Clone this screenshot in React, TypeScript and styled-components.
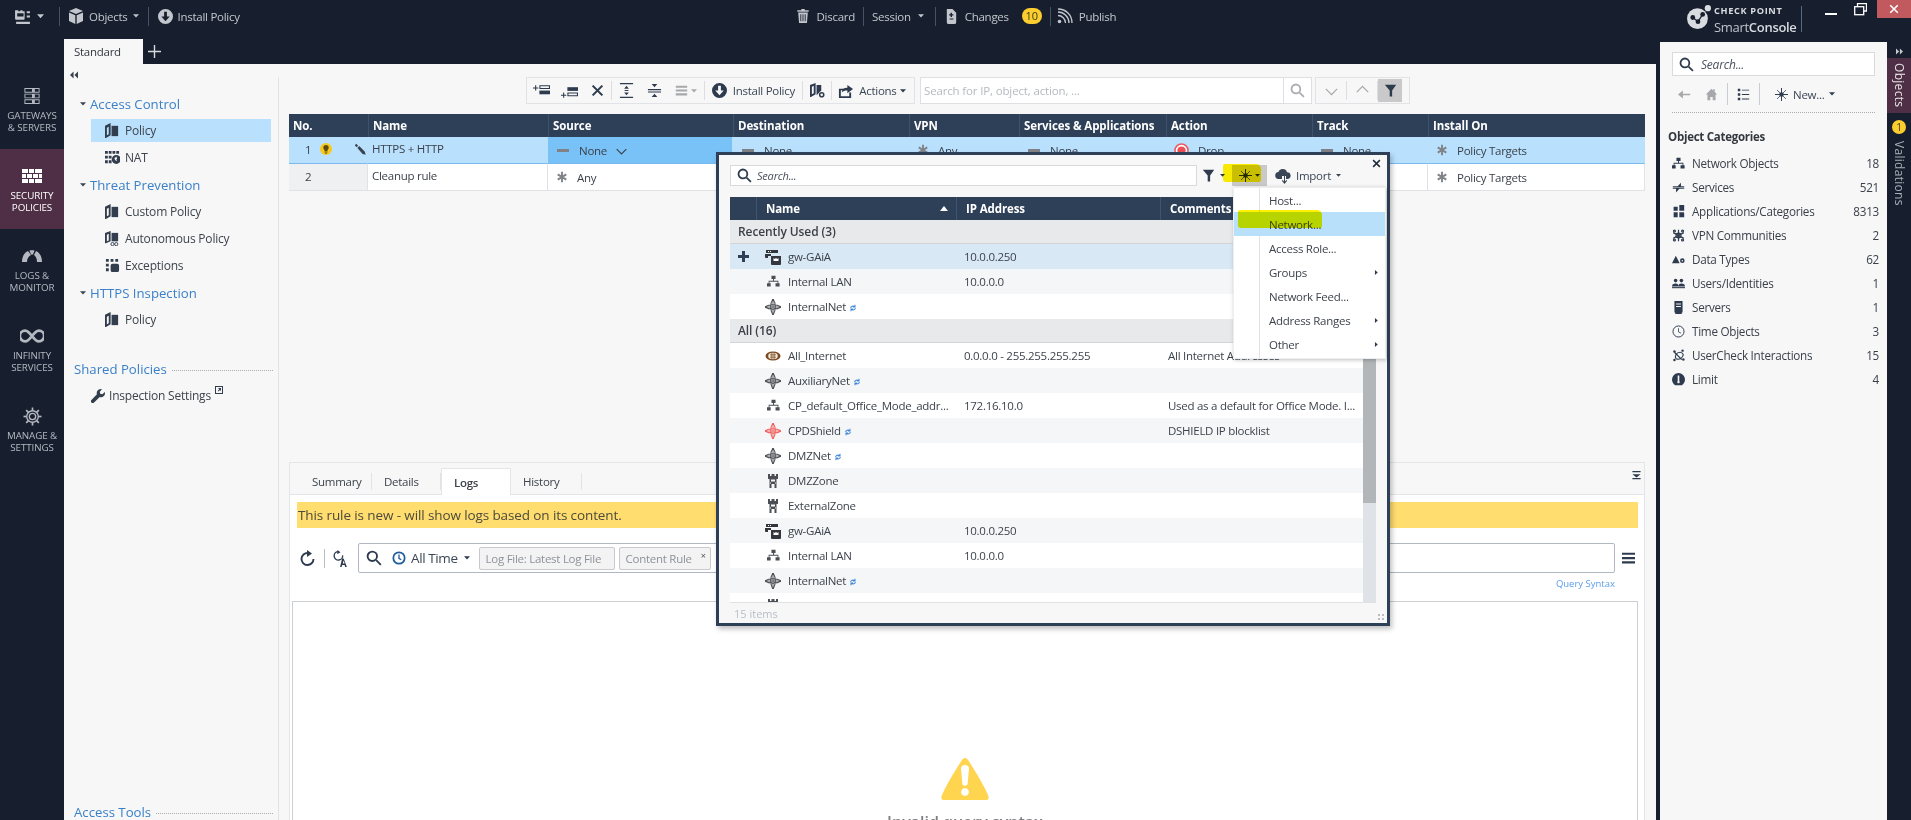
import React from 'react';
import styled, { createGlobalStyle } from 'styled-components';

const Global = createGlobalStyle`
  html, body { margin: 0; padding: 0; background: #171f2e; }
  * { box-sizing: border-box; }
`;

const DARK = '#171f2e';
const NAVY = '#2e3f58';
const INK = '#3b4049';
const PAPER = '#f7f7f7';
const MAROON = '#4e2f45';

const Root = styled.div`
  position: relative;
  width: 1911px;
  height: 820px;
  overflow: hidden;
  background: ${DARK};
  display: flex;
  flex-direction: column;
  font-family: "Open Sans", "Noto Sans", sans-serif;
  font-size: 11.5px;
  letter-spacing: -0.27px;
  color: ${INK};
`;

const Glyph = styled.svg<{ $c?: string }>`
  display: block;
  flex: none;
  color: ${(p) => p.$c || 'inherit'};
  fill: currentColor;
`;

type IconProps = { s?: number; c?: string };
const make = (body: React.ReactNode, vb = '0 0 16 16') =>
  ({ s = 16, c }: IconProps) => (
    <Glyph $c={c} width={s} height={s} viewBox={vb}>{body}</Glyph>
  );

const line = (d: string, w = 1.4) => <path d={d} fill="none" stroke="currentColor" strokeWidth={w} />;

/* header */
const ConsoleIcon = make(<><path d="M1 2h3v1h2V2h2v1h2V2h0v8a1 1 0 0 1-1 1H2a1 1 0 0 1-1-1z" /><path d="M3 5h6v3H3z" fill={DARK} /><path d="M12 3h3v2h-3zM12 7h3v2h-3zM2 13h13v2H2z" /></>);
const CubeIcon = make(<><path d="M8 0l7 3-7 3-7-3z" /><path d="M1 4.5l6.3 2.7V16L1 13z" /><path d="M15 4.5L8.7 7.2V16l6.3-3z" /></>);
const InstallIcon = make(<path fillRule="evenodd" d="M8 0a8 8 0 1 1 0 16A8 8 0 0 1 8 0zM6.5 3v5H3.5L8 13l4.5-5h-3V3z" />);
const TrashIcon = make(<path d="M6 0h4v1.5h4.5V3h-13V1.5H6zM2.5 4h11l-1 12h-9zM5 6v8h1V6zm2.5 0v8h1V6zM10 6v8h1V6z" />);
const ChangesIcon = make(<path fillRule="evenodd" d="M3 0h6l4 4v10a2 2 0 0 1-2 2H5a2 2 0 0 1-2-2zM7 4v1.5H5.500V7H7v1.500h1.500V7H10V5.500H8.500V4zM6 10v1.300h4V10z" />);
const RssIcon = make(<>{line('M1 4c6 0 11 5 11 11', 1.3)}{line('M1 7.500c4 0 7.500 3.500 7.500 7.500', 1.3)}{line('M1 1c8 0 14 6 14 14', 1.3)}<circle cx="2.500" cy="13.500" r="1.800" /></>);
const LogoIcon = make(<><circle cx="11" cy="13" r="10" /><g fill={DARK}><circle cx="6.500" cy="12" r="2.300" /><circle cx="11.500" cy="16" r="2.300" /><circle cx="16" cy="9" r="2.300" /></g><path d="M6.500 12l5 4 4.500-7" fill="none" stroke={DARK} strokeWidth="1.200" /><circle cx="21" cy="3" r="3" /></>, '0 0 24 24');

/* rail */
const GatewaysIcon = make(<g>{[1, 7, 13].map((y) => <path key={y} fillRule="evenodd" d={`M1 ${y}h16v5H1zM2 ${y + 1}v3h7v-3zM12 ${y + 1}v3h4v-3z`} />)}</g>, '0 0 18 19');
const BricksIcon = make(<path d="M0 1h6v4H0zM7 1h5v4H7zM13 1h7v4h-7zM0 6h4v4H0zM5 6h5v4H5zM11 6h5v4h-5zM17 6h3v4h-3zM0 11h6v4H0zM7 11h5v4H7zM13 11h7v4h-7z" />, '0 0 20 16');
const GaugeIcon = make(<path d="M1 14C1 8 4 4 7 3l3 4c-2 1-4 3-4 7zM8.500 2.500C9.500 2 12 2 13.500 2.500L12 6.500h-2zM15 3c3 1 6 5 6 11h-5c0-4-1.500-6-3-7z" />, '0 0 22 16');
const InfinityIcon = make(line('M11 8C8 4 6.500 3 4.800 3a5 5 0 0 0 0 10C6.500 13 8 12 11 8c3-4 4.500-5 6.200-5a5 5 0 0 1 0 10C15.500 13 14 12 11 8z', 2.600), '0 0 22 16');
const GearIcon = make(<><circle cx="9" cy="9" r="5.500" fill="none" stroke="currentColor" strokeWidth="1.300" /><circle cx="9" cy="9" r="3" fill="none" stroke="currentColor" strokeWidth="1.300" /><g stroke="currentColor" strokeWidth="1.600">{[0, 45, 90, 135, 180, 225, 270, 315].map((a) => <line key={a} x1="9" y1="0.500" x2="9" y2="3.500" transform={`rotate(${a} 9 9)`} />)}</g></>, '0 0 18 18');

/* nav */
const BookIcon = make(<><path fillRule="evenodd" d="M0 3l6-3v13l-5 3H0zM2 5v8l2-1V4z" /><path d="M7 3h7v11H7z" /></>);
const NatIcon = make(<><path d="M0 1h3v3H0zM4 1h3v3H4zM8 1h3v3H8zM12 1h3v3h-3zM0 6h3v3H0zM4 6h3v3H4zM0 11h3v3H0zM4 11h3v3H4z" /><circle cx="12" cy="10" r="4.800" /><path d="M10 9l2-2 1 2-1 1 1 2-2-1z" fill={PAPER} /></>);
const AutoBookIcon = make(<><path fillRule="evenodd" d="M0 2l6-2v11l-5 2H0zM2 4v7l2-1V3z" /><path d="M7 2h7v9H7z" /><circle cx="8" cy="14" r="1.700" fill="none" stroke="currentColor" /><circle cx="12" cy="14" r="1.700" fill="none" stroke="currentColor" /></>);
const ExceptionsIcon = make(<path d="M1 1h3v3H1zM6 1h3v3H6zM11 1h3v3h-3zM1 6h3v3H1zM1 11h3v3H1zM8 6h5a2 2 0 0 1 2 2v5a2 2 0 0 1-2 2H8a2 2 0 0 1-2-2V8a2 2 0 0 1 2-2z" />);
const WrenchIcon = make(<path d="M11 0a4.500 4.500 0 0 1 1.500.3L10 3l.5 2.500L13 6l2.700-2.500A4.500 4.500 0 0 1 10 9.200L3.500 15.500a1.500 1.500 0 0 1-3-3L6.800 6A4.500 4.500 0 0 1 11 0z" />);
const JumpIcon = make(<path fillRule="evenodd" d="M0 0h8v8H0zM1 1v6h6V1zM3 2h3v3l-1-1-1.500 1.500-.7-.7L4.300 3.300z" />, '0 0 8 8');

/* toolbar */
const AddAboveIcon = make(<><path d="M0 3h2V1h1v2h2v1H3v2H2V4H0z" /><path fillRule="evenodd" d="M6 1h10v3.500H6zM7 2v1.500h8V2z" /><path d="M6 6h10v3.500H6z" /></>, '0 0 16 10');
const AddBelowIcon = make(<><path d="M6 0h10v3.500H6z" /><path fillRule="evenodd" d="M6 5h10v3.500H6zM7 6v1.500h8V6z" /><path d="M0 7h2V5h1v2h2v1H3v2H2V8H0z" /></>, '0 0 16 10');
const CrossIcon = make(line('M2 2l12 12M14 2L2 14', 2.600));
const ExpandIcon = make(<path d="M1 0h14v1.300H1zM1 14.700h14V16H1zM8 3l2.500 3h-5zM8 13l-2.500-3h5zM6 7.400h4v1.200H6z" />);
const CollapseIcon = make(<path d="M5 1h6L8 4.500zM1 6.500h14v1.200H1zM1 9h14v1.200H1zM5 15h6l-3-3.500z" />);
const LinesIcon = make(<path d="M1 2h14v2.500H1zM1 6.700h14v2.500H1zM1 11.500h14V14H1z" />);
const PolicyGearIcon = make(<><path fillRule="evenodd" d="M0 2l6-2v12l-5 3H0zM2 4v8l2-1V3z" /><path d="M7 2h5v6l-5 5z" /><circle cx="12.500" cy="12.500" r="2.200" fill="none" stroke="currentColor" strokeWidth="1.600" /></>);
const ShareIcon = make(<><path d="M1 6h6v1.800H3v6.400h9V10h2v6H1z" /><path d="M4 10c0-3 2-5 6-5V2l6 4.500L10 11V8C7 8 5.500 8.500 4 10z" /></>);
const SearchIcon = make(<><circle cx="6.300" cy="6.300" r="4.700" fill="none" stroke="currentColor" strokeWidth="1.900" /><path d="M9.500 10.800l1.300-1.300 4.700 4.700-1.300 1.300z" /></>);
const FunnelIcon = make(<path d="M1 1h14L10 8v7.500H7V8z" />);
const CaretDown = make(<path d="M0 0h8L4 4.500z" />, '0 0 8 5');
const CaretRight = make(<path d="M0 0v8l4.500-4z" />, '0 0 5 8');
const ChevUp = make(line('M1 10l7-7 7 7', 1.500));
const ChevDown = make(line('M1 6l7 7 7-7', 1.500));

/* table */
const DashIcon = make(<path d="M1 6h12v3H1z" fill="#808287" />, '0 0 14 14');
const AnyIcon = make(<path stroke="#7f8287" strokeWidth="2.200" d="M7 1v12M2 4l10 6M12 4L2 10" />, '0 0 14 14');
const PencilIcon = make(<path d="M1 3l2-2 2.500 2.500-2 2zM4.500 6.500L7 4l7.500 7.500 1 4-4-1z" />);
const BulbIcon = make(<><circle cx="8" cy="8" r="8" fill="#f8c81e" /><path d="M8 2.500a3.700 3.700 0 0 1 2 6.800V11H6V9.300A3.700 3.700 0 0 1 8 2.500zM6 11.800h4v1H6zM7 13.300h2v1H7z" fill="#5a4a10" /></>);
const DropIcon = make(<><circle cx="8" cy="8" r="7" fill="#fff" stroke="#ea5a62" strokeWidth="1.600" /><circle cx="8" cy="8" r="4.400" fill="#ee4e55" /></>);

/* popup + categories */
const TreeIcon = make(<path d="M5.500 1h5v4H8.600v2H14v3h1.500v4h-5v-4H13V8.200H3V10h1.500v4h-5v-4H2V7h5.400V5H5.500z" />);
const NetIcon = make(<><path d="M8 0C11 4 11 12 8 16 5 12 5 4 8 0zM0 8c4-3 12-3 16 0-4 3-12 3-16 0z" fill="none" stroke="currentColor" strokeWidth="1.100" /><path d="M8 0v16M0 8h16" stroke="currentColor" strokeWidth=".9" /></>);
const ZoneIcon = make(<path fillRule="evenodd" d="M3 1h2v2h1.500V1h3v2H11V1h2v5h-1.500v9H9.500v-4h-3v4h-2V6H3zM6 6.500v2h4v-2zM5 9.500v1h1v-1zm5 0v1h1v-1z" />);
const GwIcon = make(<><path fillRule="evenodd" d="M1 1h12v3H1zM0 5h6v2H3v2H1a1 1 0 0 1-1-1z" /><path d="M6 7h10v8a1 1 0 0 1-1 1H7a1 1 0 0 1-1-1z" /><path d="M8.500 9l1.300 1L11 9l1.200 1L13.500 9v3h-5z" fill="#fff" /><path d="M3 2h1v1H3zm2 0h1v1H5z" fill="#fff" /></>);
const BallIcon = make(<><ellipse cx="8" cy="8" rx="7.500" ry="4.500" fill="#7a4a22" /><ellipse cx="8" cy="8" rx="4.800" ry="3.200" fill="#f2e8d8" /><path d="M5 6.500h6v.8H5zM5 8.700h6v.8H5zM6.500 5h.8v6h-.8zM8.700 5h.8v6h-.8z" fill="#7a4a22" /></>);
const SyncIcon = make(<path fill="none" stroke="#3d86d8" strokeWidth="1.300" d="M2 5a3 3 0 0 1 5-1.600M8 5a3 3 0 0 1-5 1.600M7.500 1v2.600H5M2.500 9V6.400H5" />, '0 0 10 10');
const CloudIcon = make(<><path d="M4 11a3.500 3.500 0 0 1-.5-7A4.500 4.500 0 0 1 12 4.300 3.400 3.400 0 0 1 13 11h-2V8H7v3z" /><path d="M9 7h1v6.500l1.500-1.500.7.700L9.500 16l-2.700-3.300.7-.700L9 13.500z" /></>);
const StarIcon = make(<g stroke="currentColor"><path strokeWidth="1.200" d="M8 0v16M0 8h16" /><path strokeWidth=".900" d="M2.500 2.500l11 11M13.500 2.500l-11 11" /><circle cx="8" cy="8" r="2.800" stroke="none" /></g>);
const SwapIcon = make(<path d="M1 6.500h6L11 2v4.500h4v1.300H1zM15 9.500H9L5 14V9.500H1V8.200h14z" />);
const AppsIcon = make(<path d="M2 2h5v5H2zM9 0h6a1 1 0 0 1 0 0v7H9zM2 9h5v6H2zM9 9h5a1 1 0 0 1 1 1v5H9z" />);
const SnowIcon = make(<g stroke="currentColor" strokeWidth="1.500" fill="none"><path d="M8 1v14M1.500 4.500l13 7M14.500 4.500l-13 7" /><circle cx="8" cy="8" r="3" /><circle cx="3" cy="2.500" r="1.200" /><circle cx="13" cy="2.500" r="1.200" /><circle cx="3" cy="13.500" r="1.200" /><circle cx="13" cy="13.500" r="1.200" /></g>);
const DataIcon = make(<><path d="M5 3l5 10H0z" /><path fillRule="evenodd" d="M13.500 6.500a3 3 0 1 1 0 6 3 3 0 0 1 0-6zm0 2a1 1 0 1 0 0 2 1 1 0 0 0 0-2z" /></>, '0 0 17 16');
const UsersIcon = make(<><circle cx="5" cy="4" r="2.500" /><circle cx="13" cy="4" r="2.500" /><path d="M0 12c0-3 2-4 5-4s4 1 4 4zM9 12c0-3 1-4 4-4s5 1 5 4z" /><path d="M0 13h18v1.500H0z" /></>, '0 0 18 16');
const ServerIcon = make(<path fillRule="evenodd" d="M3 0h10v14h-1v2H4v-2H3zM5 3v1.300h6V3zm0 3v1.300h6V6z" />);
const ClockIcon = make(<><circle cx="8" cy="8" r="6.800" fill="none" stroke="currentColor" strokeWidth="1.200" /><path d="M8 4v4.500l3 1.500" fill="none" stroke="currentColor" strokeWidth="1" /></>);
const CheckIcon = make(<><circle cx="3" cy="3" r="1.500" /><circle cx="13" cy="2" r="1.500" /><circle cx="3" cy="13.500" r="1.500" /><circle cx="14" cy="13" r="1.500" /><path d="M3 4l9 9" stroke="currentColor" strokeWidth="1.500" fill="none" /><path d="M5 12c-2-3 0-8 5-8 2 0 3 1 4 3-1 4-5 7-9 5z" fill="none" stroke="currentColor" strokeWidth="1.300" /></>);
const LimitIcon = make(<path fillRule="evenodd" d="M8 0a8 8 0 0 1 8 8c0 3-1.500 5.500-4 7H4C1.500 13.500 0 11 0 8a8 8 0 0 1 8-8zM7 3v7a1.500 1.500 0 1 0 2 0V3z" />);
const HomeIcon = make(<path d="M8 1l2 2V1.500h2V5l3 3h-2v7H9.500v-4h-3v4H3V8H1z" />);
const ArrowLeftIcon = make(<path d="M6 3v4h9v2H6v4L0 8z" />);
const ListIcon = make(<path d="M1 1h3v3H1zM6 2h9v1H6zM1 6.500h3v3H1zM6 7.500h9v1H6zM1 12h3v3H1zM6 13h9v1H6z" />);
const TwinLeft = make(<path d="M4 0v8L0 4zM9 0v8L5 4z" />, '0 0 9 8');
const TwinRight = make(<path d="M0 0v8l4-4zM5 0v8l4-4z" />, '0 0 9 8');
const TwinDown = make(<path d="M0 0h10v1.500H0zM0 4h10L5 8zM0 8.500h10V10H0z" />, '0 0 10 11');
const RefreshIcon = make(<><path d="M13.500 9A6 6 0 1 1 8 3" fill="none" stroke="currentColor" strokeWidth="1.900" /><path d="M7 0l5 3.500L7 7z" /></>);
const RefreshAIcon = make(<><path d="M10 5A4 4 0 1 1 5.500 1.500" fill="none" stroke="currentColor" strokeWidth="1.300" /><path d="M5 0l3 2-3 2z" /><path d="M9.500 8h1.500l3 8h-1.500l-.7-2H9.700L9 16H7.600zm.6 4.800h1.800l-.9-3z" /></>);
const BlueClockIcon = make(<><circle cx="8" cy="8" r="6.500" fill="none" stroke="#1e5c9c" strokeWidth="2" /><path d="M8 4v4.500l2.500 1.500" fill="none" stroke="#1e5c9c" strokeWidth="1.500" /></>);
const MenuIcon = make(<path d="M0 1h16v2.500H0zM0 6.300h16v2.500H0zM0 11.500h16V14H0z" />);
const PlusIcon = make(<path d="M5.800 0h1.400v5.800H13v1.400H7.200V13H5.800V7.200H0V5.800h5.800z" />, '0 0 13 13');
const BoldPlusIcon = make(<path d="M4 0h3v4h4v3H7v4H4V7H0V4h4z" />, '0 0 11 11');
const WarnIcon = make(<><path d="M24 0c1.500 0 2.400 1 3.400 2.500C33 11 44 29 47.500 38.500c.6 1.700-.3 3.500-2 3.500H2.500c-1.700 0-2.600-1.800-2-3.500C4 29 15 11 20.600 2.500 21.600 1 22.500 0 24 0z" fill="#ffd44f" /><path d="M20 11a4 4 0 0 1 8 0l-1.300 14a2.700 2.700 0 0 1-5.400 0z" fill="#fff" /><circle cx="24" cy="34" r="3.800" fill="#fff" /></>, '0 0 48 42');

/* header bar */
const Header = styled.header`
  height: 39px;
  flex: none;
  display: flex;
  color: #c3c7cd;
`;
const HeaderLeft = styled.div`
  width: 795px;
  padding: 0 0 7px 14px;
  display: flex;
  align-items: center;
`;
const HeaderCenter = styled(HeaderLeft)`
  width: 892px;
  padding-left: 1px;
`;
const HeaderRight = styled.div`
  flex: 1;
  display: flex;
  align-items: flex-start;
`;
const HeaderSep = styled.span<{ $l: number; $r: number }>`
  width: 1px;
  height: 19px;
  background: #4a5262;
  margin: 0 ${(p) => p.$r}px 0 ${(p) => p.$l}px;
`;
const HeaderAction = styled.span<{ $gap?: number }>`
  display: flex;
  align-items: center;
  gap: ${(p) => p.$gap ?? 5}px;
  white-space: nowrap;
`;
const MenuGap = styled.span`
  width: 6px;
`;
const CountBadge = styled.span`
  width: 20px;
  height: 16px;
  border-radius: 8px;
  background: #fbcd2f;
  color: #3a3a20;
  font-size: 11px;
  letter-spacing: 0;
  line-height: 16px;
  text-align: center;
  margin-left: 13px;
`;
const Brand = styled.div`
  display: flex;
  align-items: flex-start;
  color: #d8dbe0;
  margin-top: 5px;
`;
const BrandText = styled.div`
  margin-left: 3px;
  width: 87px;
`;
const BrandTop = styled.div`
  font-size: 9.2px;
  font-weight: 700;
  letter-spacing: 0.65px;
  line-height: 12px;
`;
const BrandName = styled.div`
  font-size: 13px;
  letter-spacing: -0.3px;
  line-height: 18px;
  margin-top: 1px;
  color: #bfc4cc;
  b { font-weight: 600; color: #d8dbe0; }
`;
const BrandSep = styled.span`
  width: 1px;
  height: 26px;
  background: #55688a;
  margin-top: 1px;
`;
const WindowButtons = styled.div`
  flex: 1;
  display: flex;
  align-items: flex-start;
  color: #fff;
`;
const MinGlyph = styled.span`
  width: 12px;
  height: 2px;
  background: #fff;
  margin: 13px 0 0 23px;
`;
const RestoreGlyph = styled.svg`
  margin: 3px 0 0 17px;
  fill: none;
  stroke: #fff;
`;
const CloseBtn = styled.span`
  margin-left: 10px;
  width: 34px;
  height: 18px;
  background: #c15a5f;
  display: flex;
  align-items: center;
  justify-content: center;
`;

const Body = styled.div`
  flex: 1;
  display: flex;
  min-height: 0;
`;

/* left rail */
const Rail = styled.nav`
  width: 64px;
  flex: none;
  padding-top: 30px;
`;
const RailItem = styled.div<{ $active?: boolean }>`
  height: 80px;
  padding-top: 17px;
  background: ${(p) => (p.$active ? MAROON : 'transparent')};
  color: ${(p) => (p.$active ? '#fff' : '#b4b9c1')};
  display: flex;
  flex-direction: column;
  align-items: center;
  text-align: center;
`;
const RailIconBox = styled.div`
  height: 20px;
  display: flex;
  align-items: center;
`;
const RailLabel = styled.div`
  font-size: 9.8px;
  letter-spacing: -0.1px;
  line-height: 12px;
  margin-top: 4px;
  text-transform: uppercase;
`;

/* workspace */
const Workspace = styled.main`
  width: 1592px;
  flex: none;
  display: flex;
  flex-direction: column;
`;
const TabStrip = styled.div`
  height: 25px;
  flex: none;
  display: flex;
  align-items: center;
`;
const WorkTab = styled.div`
  width: 79px;
  height: 25px;
  background: ${PAPER};
  padding-left: 10px;
  line-height: 25px;
  color: #33383f;
`;
const PlusBtn = styled.span`
  margin-left: 5px;
  color: #d6d9de;
`;
const Content = styled.div`
  flex: 1;
  display: flex;
  background: ${PAPER};
  min-height: 0;
`;

/* policy nav */
const NavPane = styled.aside`
  width: 215px;
  flex: none;
  margin-top: 13px;
  border-right: 1px solid #e1e3e6;
  display: flex;
  flex-direction: column;
`;
const CollapseBtn = styled.div`
  height: 12px;
  margin: -6px 0 0 6px;
  color: #39414d;
`;
const NavTree = styled.div`
  padding-top: 7px;
  display: flex;
  flex-direction: column;
`;
const NavHeading = styled.div`
  height: 27px;
  display: flex;
  align-items: center;
  padding-left: 16px;
  font-size: 13.2px;
  letter-spacing: 0;
  gap: 4px;
  color: #3a80c9;
  svg { color: #3a4350; }
`;
const NavRow = styled.div<{ $on?: boolean }>`
  margin: 2px 7px 2px 27px;
  height: 23px;
  padding-left: 14px;
  background: ${(p) => (p.$on ? '#b9e1fd' : 'transparent')};
  display: flex;
  align-items: center;
  gap: 5px;
  font-size: 12px;
  letter-spacing: -0.2px;
  color: #3d434c;
  svg { color: #323d4d; }
`;
const SharedHeading = styled.div<{ $bottom?: boolean }>`
  margin: ${(p) => (p.$bottom ? 'auto 5px -2px 10px' : '26px 5px 0 10px')};
  height: 20px;
  display: flex;
  align-items: center;
  gap: 5px;
  font-size: 13.2px;
  letter-spacing: 0;
  color: #3a80c9;
  &::after {
    content: '';
    flex: 1;
    border-top: 1px dotted #a9adb3;
    margin-top: 2px;
  }
`;
const InspectionRow = styled.div`
  margin: 5px 0 0 27px;
  height: 23px;
  display: flex;
  align-items: center;
  gap: 4px;
  font-size: 12px;
  letter-spacing: -0.2px;
  color: #3d434c;
  svg { color: #323d4d; }
`;
const Jump = styled.span`
  align-self: flex-start;
  margin-top: 2px;
  color: #323d4d;
`;

/* rulebase */
const Main = styled.section`
  flex: 1;
  min-width: 0;
  padding: 13px 11px 0 10px;
  display: flex;
  flex-direction: column;
`;
const ToolRow = styled.div`
  height: 27px;
  flex: none;
  margin-left: 237px;
  display: flex;
`;
const ToolBox = styled.div<{ $w: number }>`
  width: ${(p) => p.$w}px;
  border: 1px solid #e1e3e6;
  display: flex;
  align-items: center;
  color: #2e3b4e;
`;
const ToolSlot = styled.span<{ $w: number; $off?: boolean; $sel?: boolean; $dy?: number }>`
  width: ${(p) => p.$w}px;
  display: flex;
  align-items: center;
  justify-content: center;
  color: ${(p) => (p.$off ? '#a6a8ab' : '#2e3b4e')};
  height: ${(p) => (p.$sel ? '23px' : 'auto')};
  background: ${(p) => (p.$sel ? '#c9c9c9' : 'transparent')};
  gap: 3px;
  margin-top: ${(p) => (p.$dy ?? 0) * 2}px;
`;
const ToolSep = styled.span`
  width: 1px;
  height: 19px;
  background: #dcdee1;
`;
const ToolLabel = styled.span`
  color: #3a4656;
  white-space: nowrap;
`;
const RuleSearch = styled.div`
  width: 392px;
  margin: 0 3px 0 5px;
  border: 1px solid #dddfe3;
  background: #fff;
  display: flex;
  align-items: center;
  padding-left: 3px;
  letter-spacing: -0.15px;
  color: #b5b9c0;
`;
const RuleSearchBtn = styled.span`
  margin-left: auto;
  width: 28px;
  height: 100%;
  border-left: 1px solid #dddfe3;
  display: flex;
  align-items: center;
  justify-content: center;
  color: #a9acb0;
`;

const RuleTable = styled.div`
  margin-top: 10px;
  flex: none;
  display: grid;
  grid-template-columns: 79px 180px 185px 176px 110px 147px 146px 116px 217px;
  grid-template-rows: 23px 27px 27px;
`;
const Head = styled.div`
  background: ${NAVY};
  color: #fff;
  font-weight: 700;
  letter-spacing: -0.1px;
  display: flex;
  align-items: center;
  padding-left: 4px;
  border-left: 1px solid #3e5270;
  &:first-child { border-left: 0; }
`;
const Cell = styled.div<{ $row: 'sel' | 'plain' | 'focus' | 'num' }>`
  display: flex;
  align-items: center;
  gap: 9px;
  padding-left: 8px;
  color: #3a3f48;
  white-space: nowrap;
  background: ${(p) =>
    p.$row === 'sel' ? '#b9e1fd' : p.$row === 'focus' ? '#78c2f7' : p.$row === 'num' ? '#eff0f2' : '#fff'};
  border-bottom: 1px solid ${(p) => (p.$row === 'sel' || p.$row === 'focus' ? '#78b9ee' : '#e0e2e6')};
  border-right: 1px solid ${(p) => (p.$row === 'sel' || p.$row === 'focus' ? '#b9e1fd' : '#e0e2e6')};
`;
const NumCell = styled(Cell)`
  padding-left: 16px;
  padding-bottom: 2px;
`;
const NameCell = styled(Cell)`
  padding-left: 4px;
  padding-bottom: 3px;
`;
const PencilBox = styled.span`
  margin-left: auto;
  margin-right: 1px;
  display: flex;
  color: #3a4350;
`;

/* lower pane */
const LowerPane = styled.div`
  margin-top: 271px;
  flex: 1;
  min-height: 0;
  display: flex;
  flex-direction: column;
  border: 1px solid #e3e5e8;
  border-bottom: 0;
`;
const PaneTabs = styled.div`
  height: 31px;
  flex: none;
  padding: 5px 0 0 10px;
  display: flex;
  align-items: stretch;
  color: #3d434c;
`;
const PaneTab = styled.div<{ $on?: boolean; $w: number }>`
  width: ${(p) => p.$w}px;
  display: flex;
  align-items: center;
  padding-left: 12px;
  margin-bottom: -1px;
  background: ${(p) => (p.$on ? '#fff' : 'transparent')};
  border: ${(p) => (p.$on ? '1px solid #e3e5e8' : 0)};
  border-bottom: 0;
  font-weight: ${(p) => (p.$on ? 600 : 400)};
  position: relative;
  z-index: 1;
  &::after {
    content: '';
    display: ${(p) => (p.$on ? 'none' : 'block')};
    margin-left: auto;
    width: 1px;
    height: 17px;
    background: #e1e3e6;
  }
`;
const PaneFold = styled.span`
  margin: 3px 3px 0 auto;
  color: #2e3b4e;
`;
const PaneBody = styled.div`
  flex: 1;
  min-height: 0;
  background: #fff;
  border-top: 1px solid #e3e5e8;
  display: flex;
  flex-direction: column;
`;
const Notice = styled.div`
  margin: 7px 6px 0 7px;
  height: 26px;
  background: #ffdd6e;
  font-size: 13.5px;
  letter-spacing: -0.11px;
  line-height: 26px;
  padding-left: 1px;
  color: #4c4a3c;
  flex: none;
`;
const QueryRow = styled.div`
  margin-top: 15px;
  height: 30px;
  flex: none;
  display: flex;
  align-items: center;
  padding-left: 10px;
  color: #2e3b4e;
`;
const ThinSep = styled.span`
  width: 1px;
  height: 19px;
  background: #b9bdc4;
  margin: 0 7px 0 8px;
`;
const QueryBox = styled.div`
  margin-left: 9px;
  width: 1257px;
  height: 30px;
  border: 1px solid #b2b8c2;
  border-radius: 2px;
  display: flex;
  align-items: center;
  padding-left: 7px;
  color: #2e3b4e;
`;
const QuerySearch = styled.span`
  margin-right: 10px;
`;
const AllTime = styled.span`
  margin: 0 6px 0 5px;
  font-size: 13.5px;
  letter-spacing: -0.4px;
  color: #3a4656;
  white-space: nowrap;
`;
const Pill = styled.span<{ $w: number; $first?: boolean }>`
  position: relative;
  width: ${(p) => p.$w}px;
  height: 23px;
  border: 1px solid #c6c9cd;
  border-radius: 2px;
  background: #f3f3f3;
  margin-left: ${(p) => (p.$first ? 9 : 4)}px;
  padding-left: 6px;
  line-height: 21px;
  white-space: nowrap;
  color: #8d9299;
`;
const PillClose = styled.span`
  position: absolute;
  right: 4px;
  top: -3px;
  font-size: 9px;
  color: #555;
`;
const QueryMenu = styled.span`
  margin-left: 7px;
`;
const SyntaxLink = styled.div`
  flex: none;
  height: 22px;
  padding: 4px 29px 0 0;
  text-align: right;
  font-size: 9.5px;
  letter-spacing: 0;
  line-height: 14px;
  color: #5a9de8;
`;
const ResultBox = styled.div`
  margin: 6px 6px 0 2px;
  flex: 1;
  border: 1px solid #cdcfd2;
  border-bottom: 0;
  display: flex;
  flex-direction: column;
  align-items: center;
  padding-top: 153px;
`;
const ResultText = styled.div`
  margin-top: 8px;
  font-size: 16px;
  letter-spacing: 0;
  line-height: 22px;
  font-weight: 600;
  color: #7e7e80;
  white-space: nowrap;
  height: 30px;
`;

/* right panel */
const RightPanel = styled.aside`
  width: 227px;
  flex: none;
  margin: 3px 0 0 4px;
  background: ${PAPER};
  padding: 10px 12px 0;
`;
const RightSearch = styled.div`
  height: 24px;
  width: 203px;
  border: 1px solid #d8dade;
  background: #fff;
  display: flex;
  align-items: center;
  gap: 7px;
  padding-left: 6px;
  font-style: italic;
  font-size: 12px;
  letter-spacing: -0.2px;
  color: #4a515c;
  svg { color: #2e3b4e; }
`;
const RightTools = styled.div`
  height: 30px;
  margin-top: 3px;
  display: flex;
  align-items: center;
  color: #a6a8ab;
  padding-left: 6px;
`;
const ToolSpacer = styled.span`
  width: 14px;
`;
const RightSep = styled.span<{ $l: number; $r: number }>`
  width: 1px;
  height: 22px;
  background: #c9ccd0;
  margin: 0 ${(p) => p.$r}px 0 ${(p) => p.$l}px;
`;
const ListSlot = styled.span`
  color: #2e3b4e;
`;
const NewBtn = styled.span`
  display: flex;
  align-items: center;
  gap: 5px;
  color: #3a4656;
  svg { color: #2e3b4e; }
`;
const Dotted = styled.div`
  margin-top: 3px;
  border-top: 1px dotted #a9adb3;
  width: 203px;
`;
const CatTitle = styled.div`
  margin: 14px 0 0 -4px;
  font-weight: 700;
  line-height: 20px;
  color: #33383f;
`;
const CatList = styled.div`
  margin: 4px 0 0 -4px;
`;
const CatRow = styled.div`
  height: 24px;
  display: flex;
  align-items: center;
  font-size: 11.7px;
  color: #3a404a;
  white-space: nowrap;
`;
const CatIcon = styled.span`
  width: 24px;
  flex: none;
  display: flex;
  justify-content: center;
  padding-right: 3px;
  color: #2e3b4e;
`;
const CatCount = styled.span`
  margin-left: auto;
  margin-right: -4px;
`;

/* right side tabs */
const SideTabs = styled.div`
  flex: 1;
  padding-top: 9px;
  color: #a8adb5;
  display: flex;
  flex-direction: column;
  align-items: center;
`;
const SideChevron = styled.div`
  height: 10px;
  color: #c6c9ce;
`;
const SideTab = styled.div<{ $on?: boolean }>`
  writing-mode: vertical-rl;
  width: 100%;
  font-size: 12px;
  letter-spacing: 0.3px;
  display: flex;
  align-items: center;
  justify-content: center;
  height: ${(p) => (p.$on ? '55px' : 'auto')};
  margin-top: ${(p) => (p.$on ? '0' : '7px')};
  background: ${(p) => (p.$on ? MAROON : 'transparent')};
  color: ${(p) => (p.$on ? '#e6e3e6' : '#a8adb5')};
`;
const SideBadge = styled.span`
  margin-top: 7px;
  width: 14px;
  height: 14px;
  border-radius: 50%;
  background: #fbcd2f;
  color: #3a3a20;
  font-size: 10px;
  letter-spacing: 0;
  line-height: 14px;
  text-align: center;
`;

/* object picker popup */
const Picker = styled.div`
  position: absolute;
  left: 716px;
  top: 152px;
  width: 674px;
  height: 474px;
  background: ${PAPER};
  border: 3px solid ${NAVY};
  box-shadow: 2px 3px 5px rgba(0, 0, 0, 0.25);
  padding: 10px 0 0 11px;
  display: flex;
  flex-direction: column;
`;
const PickerClose = styled.span`
  position: absolute;
  right: 6px;
  top: 4px;
  color: #1f2a3a;
`;
const PickerBar = styled.div`
  height: 21px;
  flex: none;
  display: flex;
  align-items: center;
  color: #2e3b4e;
`;
const PickerSearch = styled(RightSearch)`
  width: 467px;
  height: 21px;
  gap: 5px;
  font-size: 11px;
`;
const PickerFilter = styled.span`
  margin-left: 5px;
  display: flex;
  align-items: center;
  gap: 5px;
  width: 30px;
`;
const NewToggle = styled.span`
  width: 35px;
  height: 21px;
  background: #c9c9c9;
  display: flex;
  align-items: center;
  justify-content: center;
  gap: 3px;
  color: #1f2a3a;
`;
const ImportBtn = styled.span`
  margin-left: 8px;
  display: flex;
  align-items: center;
  gap: 5px;
  color: #3a4656;
`;
const ObjGrid = styled.div`
  margin-top: 11px;
  width: 646px;
  height: 406px;
  flex: none;
  display: flex;
  flex-direction: column;
  border-bottom: 1px solid #dfe1e4;
`;
const ObjHead = styled.div`
  height: 23px;
  flex: none;
  background: ${NAVY};
  display: grid;
  grid-template-columns: 27px 200px 204px 1fr;
`;
const ObjHeadCell = styled.div`
  display: flex;
  align-items: center;
  padding-left: 9px;
  color: #fff;
  font-weight: 700;
  letter-spacing: -0.1px;
  border-right: 1px solid #41546f;
  &:last-child { border-right: 0; }
`;
const SortArrow = styled.span`
  margin-left: auto;
  margin-right: 8px;
  width: 0;
  height: 0;
  border: 4px solid transparent;
  border-top: 0;
  border-bottom: 5px solid #fff;
`;
const ObjBody = styled.div`
  flex: 1;
  min-height: 0;
  display: flex;
  overflow: hidden;
`;
const ObjRows = styled.div`
  flex: 1;
  min-width: 0;
`;
const ObjTrack = styled.div`
  width: 13px;
  flex: none;
  background: #dfe2e6;
  padding-top: 110px;
`;
const ObjThumb = styled.div`
  height: 173px;
  background: #b2b6b8;
`;
const SectionRow = styled.div`
  height: 24px;
  background: #e8e9eb;
  border-bottom: 1px solid #d3d5d8;
  padding-left: 8px;
  line-height: 23px;
  font-weight: 600;
  font-size: 12px;
  letter-spacing: -0.1px;
  color: #3a3f48;
`;
const ObjRow = styled.div<{ $tone: 'sel' | 'alt' | 'plain' }>`
  height: 25px;
  display: grid;
  grid-template-columns: 27px 200px 204px 1fr;
  align-items: center;
  color: #3d434c;
  background: ${(p) => (p.$tone === 'sel' ? '#d8e8f5' : p.$tone === 'alt' ? '#f5f6f8' : '#fff')};
`;
const RowPlus = styled.span`
  display: flex;
  justify-content: center;
  color: ${NAVY};
`;
const ObjName = styled.div`
  display: flex;
  align-items: center;
  padding-left: 8px;
  white-space: nowrap;
`;
const ObjIconBox = styled.span`
  width: 16px;
  flex: none;
  margin-right: 7px;
  display: flex;
  justify-content: center;
`;
const ObjText = styled.div`
  padding-left: 7px;
  white-space: nowrap;
  overflow: hidden;
`;
const SyncMark = styled.span`
  align-self: flex-start;
  margin: 5px 0 0 3px;
`;
const PickerFoot = styled.div`
  flex: 1;
  display: flex;
  align-items: center;
  padding-left: 4px;
  font-size: 11px;
  letter-spacing: 0;
  color: #b7bdc8;
`;
const ResizeDots = styled.span`
  position: absolute;
  right: 2px;
  bottom: 2px;
  width: 8px;
  height: 8px;
  background: radial-gradient(circle, #b9bcc2 1px, transparent 1.2px) 0 0 / 4px 4px;
`;
const NewMenu = styled.div`
  position: absolute;
  left: 514px;
  top: 32px;
  width: 153px;
  height: 172px;
  background: linear-gradient(#e0e2e5, #e0e2e5) 25px 0 / 1px 100% no-repeat, #fff;
  box-shadow: 1px 1px 4px rgba(0, 0, 0, 0.25);
  border: 1px solid #eceef0;
  z-index: 2;
`;
const NewMenuItem = styled.div<{ $on?: boolean }>`
  height: 24px;
  display: flex;
  align-items: center;
  padding: 0 6px 0 35px;
  color: #3d434c;
  background: ${(p) => (p.$on ? '#b8e0fb' : 'transparent')};
  svg { margin-left: auto; color: #2e3b4e; }
`;
const Marker = styled.span<{ $x: number; $y: number; $w: number; $h: number }>`
  position: absolute;
  left: ${(p) => p.$x}px;
  top: ${(p) => p.$y}px;
  width: ${(p) => p.$w}px;
  height: ${(p) => p.$h}px;
  background: #fff200;
  mix-blend-mode: multiply;
  border-radius: 2px 5px 2px 3px;
  z-index: 3;
`;

type Obj = {
  name: string;
  icon: React.FC<IconProps>;
  size?: number;
  ip?: string;
  note?: string;
  sync?: boolean;
  color?: string;
};

const gw: Obj = { name: 'gw-GAiA', icon: GwIcon, ip: '10.0.0.250', color: '#33373d' };
const lan: Obj = { name: 'Internal LAN', icon: TreeIcon, size: 13, ip: '10.0.0.0' };
const inner: Obj = { name: 'InternalNet', icon: NetIcon, sync: true };

const allObjects: Obj[] = [
  { name: 'All_Internet', icon: BallIcon, ip: '0.0.0.0 - 255.255.255.255', note: 'All Internet Addresses' },
  { name: 'AuxiliaryNet', icon: NetIcon, sync: true },
  { name: 'CP_default_Office_Mode_addr...', icon: TreeIcon, size: 13, ip: '172.16.10.0', note: 'Used as a default for Office Mode. I...' },
  { name: 'CPDShield', icon: NetIcon, sync: true, note: 'DSHIELD IP blocklist', color: '#f0605f' },
  { name: 'DMZNet', icon: NetIcon, sync: true },
  { name: 'DMZZone', icon: ZoneIcon },
  { name: 'ExternalZone', icon: ZoneIcon },
  gw,
  lan,
  inner,
  { name: '', icon: ZoneIcon },
];

const categories: [React.FC<IconProps>, string, number][] = [
  [TreeIcon, 'Network Objects', 18],
  [SwapIcon, 'Services', 521],
  [AppsIcon, 'Applications/Categories', 8313],
  [SnowIcon, 'VPN Communities', 2],
  [DataIcon, 'Data Types', 62],
  [UsersIcon, 'Users/Identities', 1],
  [ServerIcon, 'Servers', 1],
  [ClockIcon, 'Time Objects', 3],
  [CheckIcon, 'UserCheck Interactions', 15],
  [LimitIcon, 'Limit', 4],
];

const ObjectRow = ({ o, tone, plus }: { o: Obj; tone: 'sel' | 'alt' | 'plain'; plus?: boolean }) => (
  <ObjRow $tone={tone}>
    <RowPlus>{plus && <BoldPlusIcon s={11} />}</RowPlus>
    <ObjName>
      <ObjIconBox><o.icon s={o.size ?? 16} c={o.color ?? '#4b4e54'} /></ObjIconBox>
      {o.name}
      {o.sync && <SyncMark><SyncIcon s={8} /></SyncMark>}
    </ObjName>
    <ObjText>{o.ip}</ObjText>
    <ObjText>{o.note}</ObjText>
  </ObjRow>
);

const NavCaret = () => <CaretDown s={6} />;

export default function App() {
  return (
    <Root>
      <Global />
      <Header>
        <HeaderLeft>
          <ConsoleIcon s={17} />
          <MenuGap />
          <CaretDown s={7} />
          <HeaderSep $l={15} $r={8} />
          <HeaderAction><CubeIcon s={16} />Objects<CaretDown s={6} /></HeaderAction>
          <HeaderSep $l={9} $r={9} />
          <HeaderAction $gap={5}><InstallIcon s={15} />Install Policy</HeaderAction>
        </HeaderLeft>
        <HeaderCenter>
          <HeaderAction $gap={7}><TrashIcon s={14} />Discard</HeaderAction>
          <HeaderSep $l={8} $r={8} />
          <HeaderAction $gap={7}>Session<CaretDown s={6} /></HeaderAction>
          <HeaderSep $l={11} $r={8} />
          <HeaderAction $gap={6}><ChangesIcon s={15} />Changes</HeaderAction>
          <CountBadge>10</CountBadge>
          <HeaderSep $l={8} $r={6} />
          <HeaderAction $gap={6}><RssIcon s={16} />Publish</HeaderAction>
        </HeaderCenter>
        <HeaderRight>
          <Brand>
            <LogoIcon s={25} />
            <BrandText>
              <BrandTop>CHECK POINT</BrandTop>
              <BrandName>Smart<b>Console</b></BrandName>
            </BrandText>
            <BrandSep />
          </Brand>
          <WindowButtons>
            <MinGlyph />
            <RestoreGlyph width="13" height="13" viewBox="0 0 13 13">
              <path d="M3.500 3V.7h9V8H10" strokeWidth="1.300" />
              <rect x=".7" y="3.700" width="9" height="8" strokeWidth="1.300" />
            </RestoreGlyph>
            <CloseBtn><CrossIcon s={10} c="#fff" /></CloseBtn>
          </WindowButtons>
        </HeaderRight>
      </Header>

      <Body>
        <Rail>
          <RailItem><RailIconBox><GatewaysIcon s={18} /></RailIconBox><RailLabel>Gateways<br />&amp; Servers</RailLabel></RailItem>
          <RailItem $active><RailIconBox><BricksIcon s={20} /></RailIconBox><RailLabel>Security<br />Policies</RailLabel></RailItem>
          <RailItem><RailIconBox><GaugeIcon s={22} /></RailIconBox><RailLabel>Logs &amp;<br />Monitor</RailLabel></RailItem>
          <RailItem><RailIconBox><InfinityIcon s={24} /></RailIconBox><RailLabel>Infinity<br />Services</RailLabel></RailItem>
          <RailItem><RailIconBox><GearIcon s={19} /></RailIconBox><RailLabel>Manage &amp;<br />Settings</RailLabel></RailItem>
        </Rail>

        <Workspace>
          <TabStrip>
            <WorkTab>Standard</WorkTab>
            <PlusBtn><PlusIcon s={13} /></PlusBtn>
          </TabStrip>
          <Content>
            <NavPane>
              <CollapseBtn><TwinLeft s={8} /></CollapseBtn>
              <NavTree>
                <NavHeading><NavCaret />Access Control</NavHeading>
                <NavRow $on><BookIcon s={15} />Policy</NavRow>
                <NavRow><NatIcon s={15} />NAT</NavRow>
                <NavHeading><NavCaret />Threat Prevention</NavHeading>
                <NavRow><BookIcon s={15} />Custom Policy</NavRow>
                <NavRow><AutoBookIcon s={15} />Autonomous Policy</NavRow>
                <NavRow><ExceptionsIcon s={15} />Exceptions</NavRow>
                <NavHeading><NavCaret />HTTPS Inspection</NavHeading>
                <NavRow><BookIcon s={15} />Policy</NavRow>
              </NavTree>
              <SharedHeading>Shared Policies</SharedHeading>
              <InspectionRow>
                <WrenchIcon s={14} />Inspection Settings
                <Jump><JumpIcon s={8} /></Jump>
              </InspectionRow>
              <SharedHeading $bottom>Access Tools</SharedHeading>
            </NavPane>

            <Main>
              <ToolRow>
                <ToolBox $w={389}>
                  <ToolSlot $w={28} $dy={-1.5}><AddAboveIcon s={17} /></ToolSlot>
                  <ToolSlot $w={28} $dy={1.5}><AddBelowIcon s={17} /></ToolSlot>
                  <ToolSlot $w={28}><CrossIcon s={13} /></ToolSlot>
                  <ToolSep />
                  <ToolSlot $w={28}><ExpandIcon s={15} /></ToolSlot>
                  <ToolSlot $w={28}><CollapseIcon s={15} /></ToolSlot>
                  <ToolSlot $w={36} $off><LinesIcon s={13} /><CaretDown s={6} /></ToolSlot>
                  <ToolSep />
                  <ToolSlot $w={97}><InstallIcon s={15} /><ToolLabel>&nbsp;Install Policy</ToolLabel></ToolSlot>
                  <ToolSep />
                  <ToolSlot $w={28}><PolicyGearIcon s={15} /></ToolSlot>
                  <ToolSep />
                  <ToolSlot $w={80}><ShareIcon s={15} /><ToolLabel>&nbsp;Actions</ToolLabel><CaretDown s={6} /></ToolSlot>
                </ToolBox>
                <RuleSearch>
                  Search for IP, object, action, ...
                  <RuleSearchBtn><SearchIcon s={15} /></RuleSearchBtn>
                </RuleSearch>
                <ToolBox $w={95}>
                  <ToolSlot $w={30} $off><ChevDown s={13} /></ToolSlot>
                  <ToolSep />
                  <ToolSlot $w={30} $off><ChevUp s={13} /></ToolSlot>
                  <ToolSep />
                  <ToolSlot $w={24} $sel><FunnelIcon s={13} /></ToolSlot>
                </ToolBox>
              </ToolRow>

              <RuleTable>
                {['No.', 'Name', 'Source', 'Destination', 'VPN', 'Services & Applications', 'Action', 'Track', 'Install On'].map((h) => (
                  <Head key={h}>{h}</Head>
                ))}
                <NumCell $row="sel">1<BulbIcon s={12} /><PencilBox><PencilIcon s={12} /></PencilBox></NumCell>
                <NameCell $row="sel">HTTPS + HTTP</NameCell>
                <Cell $row="focus"><DashIcon s={14} />None<ChevDown s={11} /></Cell>
                <Cell $row="sel"><DashIcon s={14} />None</Cell>
                <Cell $row="sel"><AnyIcon s={12} />Any</Cell>
                <Cell $row="sel"><DashIcon s={14} />None</Cell>
                <Cell $row="sel"><DropIcon s={15} />Drop</Cell>
                <Cell $row="sel"><DashIcon s={14} />None</Cell>
                <Cell $row="sel"><AnyIcon s={12} />Policy Targets</Cell>
                <NumCell $row="num">2</NumCell>
                <NameCell $row="plain">Cleanup rule</NameCell>
                <Cell $row="plain"><AnyIcon s={12} />Any</Cell>
                <Cell $row="plain" />
                <Cell $row="plain" />
                <Cell $row="plain" />
                <Cell $row="plain" />
                <Cell $row="plain" />
                <Cell $row="plain"><AnyIcon s={12} />Policy Targets</Cell>
              </RuleTable>

              <LowerPane>
                <PaneTabs>
                  <PaneTab $w={72}>Summary</PaneTab>
                  <PaneTab $w={69}>Details</PaneTab>
                  <PaneTab $w={70} $on>Logs</PaneTab>
                  <PaneTab $w={71}>History</PaneTab>
                  <PaneFold><TwinDown s={9} /></PaneFold>
                </PaneTabs>
                <PaneBody>
                  <Notice>This rule is new - will show logs based on its content.</Notice>
                  <QueryRow>
                    <RefreshIcon s={16} />
                    <ThinSep />
                    <RefreshAIcon s={17} />
                    <QueryBox>
                      <QuerySearch><SearchIcon s={16} /></QuerySearch>
                      <BlueClockIcon s={14} />
                      <AllTime>All Time</AllTime>
                      <CaretDown s={6} />
                      <Pill $w={136} $first>Log File: Latest Log File</Pill>
                      <Pill $w={92}>Content Rule<PillClose>×</PillClose></Pill>
                    </QueryBox>
                    <QueryMenu><MenuIcon s={13} /></QueryMenu>
                  </QueryRow>
                  <SyntaxLink>Query Syntax</SyntaxLink>
                  <ResultBox>
                    <WarnIcon s={48} />
                    <ResultText>Invalid query syntax</ResultText>
                  </ResultBox>
                </PaneBody>
              </LowerPane>
            </Main>
          </Content>
        </Workspace>

        <RightPanel>
          <RightSearch><SearchIcon s={15} />Search...</RightSearch>
          <RightTools>
            <ArrowLeftIcon s={13} />
            <ToolSpacer />
            <HomeIcon s={13} />
            <RightSep $l={9} $r={9} />
            <ListSlot><ListIcon s={13} /></ListSlot>
            <RightSep $l={9} $r={15} />
            <NewBtn><StarIcon s={13} />New...<CaretDown s={6} /></NewBtn>
          </RightTools>
          <Dotted />
          <CatTitle>Object Categories</CatTitle>
          <CatList>
            {categories.map(([Icon, label, n]) => (
              <CatRow key={label}>
                <CatIcon><Icon s={13} /></CatIcon>
                {label}
                <CatCount>{n}</CatCount>
              </CatRow>
            ))}
          </CatList>
        </RightPanel>

        <SideTabs>
          <SideChevron><TwinRight s={7} /></SideChevron>
          <SideTab $on>Objects</SideTab>
          <SideBadge>1</SideBadge>
          <SideTab>Validations</SideTab>
        </SideTabs>
      </Body>

      <Picker>
        <PickerClose><CrossIcon s={9} /></PickerClose>
        <PickerBar>
          <PickerSearch><SearchIcon s={15} />Search...</PickerSearch>
          <PickerFilter><FunnelIcon s={13} /><CaretDown s={5} /></PickerFilter>
          <NewToggle><StarIcon s={13} /><CaretDown s={5} /></NewToggle>
          <ImportBtn><CloudIcon s={16} />Import<CaretDown s={5} /></ImportBtn>
        </PickerBar>
        <ObjGrid>
          <ObjHead>
            <ObjHeadCell />
            <ObjHeadCell>Name<SortArrow /></ObjHeadCell>
            <ObjHeadCell>IP Address</ObjHeadCell>
            <ObjHeadCell>Comments</ObjHeadCell>
          </ObjHead>
          <ObjBody>
            <ObjRows>
              <SectionRow>Recently Used (3)</SectionRow>
              <ObjectRow o={gw} tone="sel" plus />
              <ObjectRow o={lan} tone="alt" />
              <ObjectRow o={inner} tone="plain" />
              <SectionRow>All (16)</SectionRow>
              {allObjects.map((o, i) => (
                <ObjectRow key={i} o={o} tone={i % 2 ? 'alt' : 'plain'} />
              ))}
            </ObjRows>
            <ObjTrack><ObjThumb /></ObjTrack>
          </ObjBody>
        </ObjGrid>
        <PickerFoot>15 items</PickerFoot>
        <ResizeDots />
        <NewMenu>
          <NewMenuItem>Host...</NewMenuItem>
          <NewMenuItem $on>Network...</NewMenuItem>
          <NewMenuItem>Access Role...</NewMenuItem>
          <NewMenuItem>Groups<CaretRight s={5} /></NewMenuItem>
          <NewMenuItem>Network Feed...</NewMenuItem>
          <NewMenuItem>Address Ranges<CaretRight s={5} /></NewMenuItem>
          <NewMenuItem>Other<CaretRight s={5} /></NewMenuItem>
        </NewMenu>
        <Marker $x={504} $y={9} $w={38} $h={18} />
        <Marker $x={519} $y={55} $w={84} $h={18} />
      </Picker>
    </Root>
  );
}
